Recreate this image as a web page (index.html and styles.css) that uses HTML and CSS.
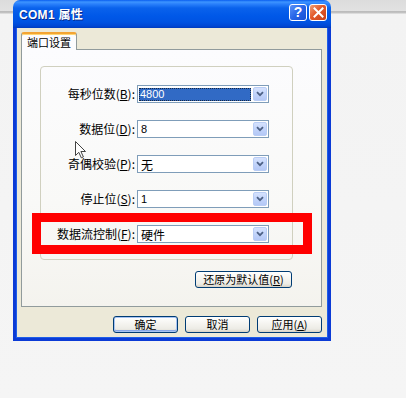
FILE: index.html
```html
<!DOCTYPE html>
<html lang="zh-CN">
<head>
<meta charset="utf-8">
<title>COM1 属性</title>
<link rel="stylesheet" href="styles.css">
</head>
<body>
<div class="dialog">
  <div class="titlebar">
    <span class="title">COM1 属性</span>
    <div class="caption-buttons">
      <span class="cap-btn help">?</span>
      <span class="cap-btn close">
        <svg width="11" height="11" viewBox="0 0 11 11"><path d="M1.5 1.5 L9.5 9.5 M9.5 1.5 L1.5 9.5" stroke="#fff" stroke-width="2" stroke-linecap="square"/></svg>
      </span>
    </div>
  </div>
  <div class="frame">
    <div class="tabs"><span class="tab">端口设置</span></div>
    <div class="panel">
      <div class="group">
        <div class="row">
          <span class="label">每秒位数(<u>B</u>):</span>
          <div class="combo"><span class="value selected">4800</span><span class="drop"><svg width="8" height="6" viewBox="0 0 8 6"><path d="M1 1.2 L4 4.2 L7 1.2" fill="none" stroke="#4d6185" stroke-width="1.8"/></svg></span></div>
        </div>
        <div class="row">
          <span class="label">数据位(<u>D</u>):</span>
          <div class="combo"><span class="value">8</span><span class="drop"><svg width="8" height="6" viewBox="0 0 8 6"><path d="M1 1.2 L4 4.2 L7 1.2" fill="none" stroke="#4d6185" stroke-width="1.8"/></svg></span></div>
        </div>
        <div class="row">
          <span class="label">奇偶校验(<u>P</u>):</span>
          <div class="combo"><span class="value cjk">无</span><span class="drop"><svg width="8" height="6" viewBox="0 0 8 6"><path d="M1 1.2 L4 4.2 L7 1.2" fill="none" stroke="#4d6185" stroke-width="1.8"/></svg></span></div>
        </div>
        <div class="row">
          <span class="label">停止位(<u>S</u>):</span>
          <div class="combo"><span class="value">1</span><span class="drop"><svg width="8" height="6" viewBox="0 0 8 6"><path d="M1 1.2 L4 4.2 L7 1.2" fill="none" stroke="#4d6185" stroke-width="1.8"/></svg></span></div>
        </div>
        <div class="row">
          <span class="label">数据流控制(<u>F</u>):</span>
          <div class="combo"><span class="value cjk">硬件</span><span class="drop"><svg width="8" height="6" viewBox="0 0 8 6"><path d="M1 1.2 L4 4.2 L7 1.2" fill="none" stroke="#4d6185" stroke-width="1.8"/></svg></span></div>
        </div>
      </div>
      <button class="btn restore">还原为默认值(<u>R</u>)</button>
    </div>
    <div class="actions">
      <button class="btn default">确定</button>
      <button class="btn">取消</button>
      <button class="btn">应用(<u>A</u>)</button>
    </div>
  </div>
</div>
<div class="highlight-box"></div>
<svg class="cursor" width="12" height="18" viewBox="0 0 12 18"><path d="M0.5 0.5 L0.5 14.5 L3.8 11.3 L6.3 16.8 L8.4 15.9 L5.9 10.5 L10.5 10.5 Z" fill="#fff" stroke="#222" stroke-width="1" stroke-linejoin="miter"/></svg>
</body>
</html>
```
FILE: styles.css
```css
html, body {
  margin: 0;
  padding: 0;
}
body {
  width: 406px;
  height: 398px;
  overflow: hidden;
  position: relative;
  background: linear-gradient(to bottom, #dcdcdc 0, #e2e2e2 11px, #b9b9b9 11px, #c4c4c4 13px, #f3f3f3 14px, #f5f5f5 100%);
  font-family: "Noto Sans CJK SC", "Liberation Sans", sans-serif;
  font-size: 11px;
  color: #000;
}
.dialog {
  margin-left: 13px;
  width: 318px;
  height: 341px;
  display: flex;
  flex-direction: column;
  border-radius: 7px 7px 0 0;
  overflow: hidden;
}
.titlebar {
  height: 28px;
  flex: none;
  display: flex;
  align-items: center;
  justify-content: space-between;
  padding: 0 4px 0 6px;
  box-sizing: border-box;
  background: linear-gradient(to bottom, #0a5ef0 0, #3d95ff 2px, #2a80fb 4px, #0a62ec 8px, #0058e8 16px, #0053e2 22px, #0047d4 26px, #003bbd 28px);
}
.title {
  color: #fff;
  font-family: "Liberation Sans", "Noto Sans CJK SC", sans-serif;
  font-weight: bold;
  font-size: 12px;
  letter-spacing: 0.3px;
  text-shadow: 1px 1px 0 #0a2a8a;
  margin-top: -1px;
}
.caption-buttons {
  display: flex;
  gap: 2px;
  margin-top: -4px;
}
.cap-btn {
  width: 18px;
  height: 17px;
  box-sizing: border-box;
  border: 1px solid #fff;
  border-radius: 3px;
  display: flex;
  align-items: center;
  justify-content: center;
  color: #fff;
}
.help {
  background: linear-gradient(135deg, #5b93f8 0, #2765e8 50%, #1a4fd2 100%);
  font-family: "Liberation Sans", sans-serif;
  font-weight: bold;
  font-size: 14px;
}
.close {
  background: linear-gradient(135deg, #f0a078 0, #e35a2a 45%, #c8401a 100%);
}
.frame {
  flex: 1;
  display: flex;
  flex-direction: column;
  background: #ece9d8;
  border: 3px solid #0b3bd6;
  border-top: none;
  box-shadow: inset 1px 0 0 #1e5ee8, inset -1px 0 0 #1e5ee8, inset 0 -1px 0 #1e5ee8;
  padding: 4px 6px 5px 5px;
}
.tabs {
  display: flex;
  position: relative;
  z-index: 1;
  height: 18px;
}
.tab {
  width: 56px;
  height: 18px;
  box-sizing: border-box;
  background: #fcfcfe;
  border: 1px solid #919b9c;
  border-bottom: none;
  border-top: 2px solid #f3a433;
  border-radius: 3px 3px 0 0;
  box-shadow: inset 0 1px 0 #ffd673;
  display: flex;
  align-items: center;
  justify-content: center;
  font-size: 11px;
  line-height: 1;
}
.panel {
  margin-top: -1px;
  height: 258px;
  box-sizing: border-box;
  border: 1px solid #919b9c;
  background: linear-gradient(to bottom, #fcfcfe 0, #f9f9f7 60%, #f4f3ee 100%);
  display: flex;
  flex-direction: column;
}
.group {
  margin: 16px 28px 0 18px;
  height: 194px;
  box-sizing: border-box;
  border: 1px solid #d0d0bf;
  border-radius: 4px;
  padding-top: 18px;
  display: flex;
  flex-direction: column;
  gap: 17px;
}
.row {
  display: flex;
  align-items: center;
  height: 18px;
}
.label {
  width: 94px;
  text-align: right;
  font-size: 12px;
  white-space: nowrap;
  margin-right: 2px;
  line-height: 1;
}
.label u, .btn u {
  text-decoration: underline;
  text-underline-offset: 1px;
}
.combo {
  width: 132px;
  height: 18px;
  box-sizing: border-box;
  border: 1px solid #7f9db9;
  background: #fff;
  display: flex;
  align-items: center;
  padding: 0 1px 0 1px;
}
.value {
  flex: 1;
  font-family: "Liberation Sans", sans-serif;
  font-size: 11px;
  padding-left: 2px;
  line-height: 13px;
  height: 13px;
}
.value.cjk {
  font-family: "Noto Sans CJK SC", sans-serif;
  font-size: 12px;
}
.value.selected {
  background: #316ac5;
  color: #fff;
  outline: 1px dotted #1a2a40;
  outline-offset: -1px;
  margin-right: 2px;
  padding-left: 1px;
}
.drop {
  width: 14px;
  height: 14px;
  box-sizing: border-box;
  border: 1px solid #b9cdf5;
  border-radius: 2px;
  background: linear-gradient(to bottom, #d6e2fd 0, #c2d4fb 50%, #b4c8f6 100%);
  display: flex;
  align-items: center;
  justify-content: center;
}
.btn {
  height: 17px;
  box-sizing: border-box;
  border: 1px solid #003c74;
  border-radius: 3px;
  background: linear-gradient(to bottom, #ffffff 0, #f6f5f1 40%, #ecebe5 80%, #d8d2c6 100%);
  font-family: "Noto Sans CJK SC", "Liberation Sans", sans-serif;
  font-size: 11px;
  line-height: 1;
  color: #000;
  padding: 0;
  display: flex;
  align-items: center;
  justify-content: center;
}
.restore {
  align-self: flex-end;
  width: 97px;
  margin: 11px 29px 0 0;
}
.actions {
  margin-top: 9px;
  display: flex;
  justify-content: flex-end;
  gap: 7px;
}
.actions .btn {
  width: 65px;
}
.btn.default {
  box-shadow: inset 0 0 0 1px #a8c4f2, inset 0 -1px 0 1px #88a8e8;
}
.highlight-box {
  position: absolute;
  left: 32px;
  top: 213px;
  width: 280px;
  height: 41px;
  box-sizing: border-box;
  border: 9px solid #ff0000;
}
.cursor {
  position: absolute;
  left: 75px;
  top: 141px;
  opacity: 0.85;
}
```
